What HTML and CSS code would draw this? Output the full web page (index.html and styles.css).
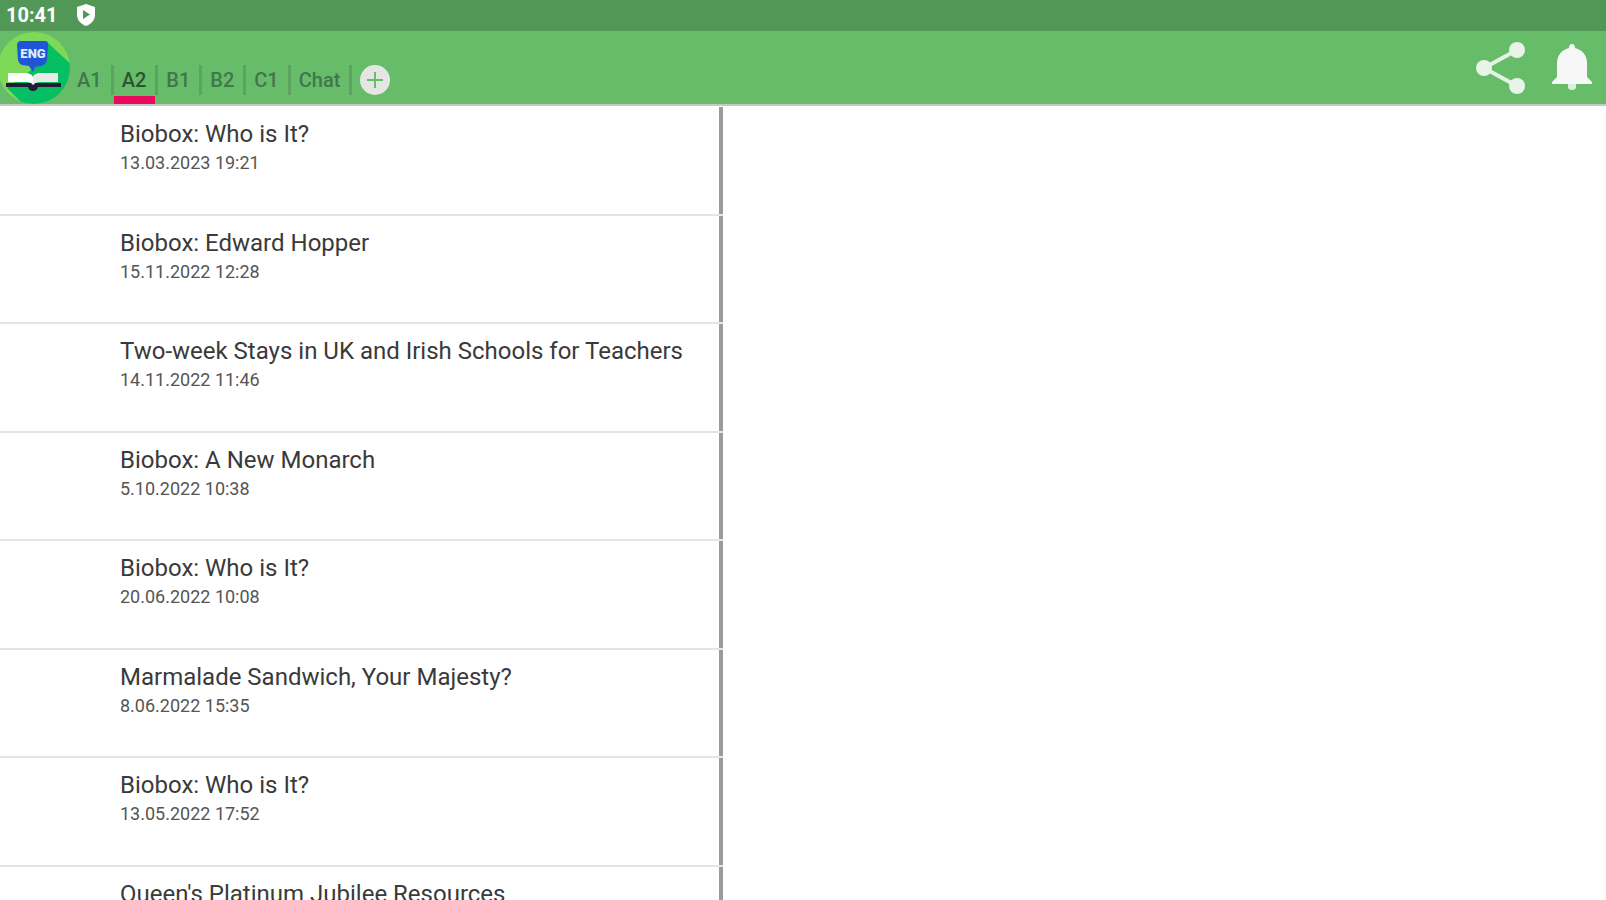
FILE: index.html
```html
<!DOCTYPE html>
<html lang="en">
<head>
  <meta charset="UTF-8">
  <meta name="viewport" content="width=device-width, initial-scale=1.0">
  <title>English Reader</title>
  <link rel="stylesheet" href="styles.css">
</head>
<body>
  <!-- Status bar -->
  <div class="status-bar">
    <span class="clock">10:41</span>
    <svg class="shield" viewBox="0 0 20 22" aria-hidden="true">
      <path d="M10 0 L19 3 V11 C19 16 15 20 10 22 C5 20 1 16 1 11 V3 Z" fill="#fff"/>
      <path d="M7 6 L14 10.5 L7 15 Z" fill="#519755"/>
    </svg>
  </div>

  <!-- Toolbar -->
  <header class="toolbar">
    <svg class="logo" viewBox="0 0 72 74" role="img" aria-label="English Reader">
      <defs>
        <clipPath id="disc"><ellipse cx="34" cy="37" rx="36" ry="36"/></clipPath>
      </defs>
      <g clip-path="url(#disc)">
        <rect x="-2" width="74" height="74" fill="#7dd957"/>
        <path d="M48 12 L72 34 V74 H24 L7 57 L30 40 Z" fill="#06bf63"/>
      </g>
      <path d="M20 10 H46 Q49 11 48 15 L47 29 Q46 34 41 35 L35 36 L33 41 L29 35 L22 34 Q19 33 18 29 L17 14 Q17 11 20 10 Z" fill="#1f56d8"/>
      <text class="logo-text" x="33" y="27" text-anchor="middle">ENG</text>
      <path d="M6 52 H61 V56 H38 Q37 60 33 60 Q29 60 28 56 H6 Z" fill="#241c35"/>
      <path d="M8 42 H27 Q32 43 33 46 Q34 43 39 42 H58 V51 H39 Q35 51 33 54 Q31 51 27 51 H8 Z" fill="#fff"/>
      <path d="M33 46 Q34 43 39 42 H58 V51 H39 Q35 51 33 54 Z" fill="#e9e9ec"/>
    </svg>

    <nav class="tabs">
      <button class="tab">A1</button>
      <button class="tab active">A2</button>
      <button class="tab">B1</button>
      <button class="tab">B2</button>
      <button class="tab">C1</button>
      <button class="tab">Chat</button>
      <button class="add" aria-label="Add tab">
        <svg viewBox="0 0 30 30">
          <circle cx="15" cy="15" r="15" fill="#e3e6e3"/>
          <path d="M15 7 V23 M7 15 H23" stroke="#67bc6a" stroke-width="2"/>
        </svg>
      </button>
    </nav>

    <div class="actions">
      <button class="action" aria-label="Share">
        <svg viewBox="0 0 52 54">
          <path d="M43 9 L10 27 L43 45" fill="none" stroke="#e2f3e3" stroke-width="4"/>
          <circle cx="43" cy="9" r="8" fill="#e6f5e7"/>
          <circle cx="10" cy="27" r="8" fill="#e6f5e7"/>
          <circle cx="43" cy="45" r="8" fill="#e6f5e7"/>
        </svg>
      </button>
      <button class="action" aria-label="Notifications">
        <svg viewBox="0 0 52 54">
          <path d="M22 43 H30 V46 Q30 49 26 49 Q22 49 22 46 Z" fill="#dcf1dd"/>
          <path d="M26 3 Q29 3 29 7 C37 9 41 15 41 22 V36 L46 41 V43 H6 V41 L11 36 V22 C11 15 15 9 23 7 Q23 3 26 3 Z" fill="#f7f7f7"/>
        </svg>
      </button>
    </div>
  </header>

  <main class="content">
    <ul class="articles">
      <li class="article">
        <h2 class="title">Biobox: Who is It?</h2>
        <p class="date">13.03.2023 19:21</p>
      </li>
      <li class="article">
        <h2 class="title">Biobox: Edward Hopper</h2>
        <p class="date">15.11.2022 12:28</p>
      </li>
      <li class="article">
        <h2 class="title">Two-week Stays in UK and Irish Schools for Teachers</h2>
        <p class="date">14.11.2022 11:46</p>
      </li>
      <li class="article">
        <h2 class="title">Biobox: A New Monarch</h2>
        <p class="date">5.10.2022 10:38</p>
      </li>
      <li class="article">
        <h2 class="title">Biobox: Who is It?</h2>
        <p class="date">20.06.2022 10:08</p>
      </li>
      <li class="article">
        <h2 class="title">Marmalade Sandwich, Your Majesty?</h2>
        <p class="date">8.06.2022 15:35</p>
      </li>
      <li class="article">
        <h2 class="title">Biobox: Who is It?</h2>
        <p class="date">13.05.2022 17:52</p>
      </li>
      <li class="article">
        <h2 class="title">Queen's Platinum Jubilee Resources</h2>
      </li>
    </ul>
    <section class="detail"></section>
  </main>
</body>
</html>
```

FILE: styles.css
```css
/* General reset */
* {
  margin: 0;
  padding: 0;
  box-sizing: border-box;
}

body {
  font-family: Roboto, "Liberation Sans", sans-serif;
  background: #fff;
  color: #3a3a3a;
  height: 100vh;
  display: flex;
  flex-direction: column;
  overflow: hidden;
}

button {
  font: inherit;
  color: inherit;
  background: none;
  border: none;
  cursor: pointer;
}

svg {
  display: block;
}

/* Status bar */
.status-bar {
  display: flex;
  align-items: center;
  gap: 18px;
  height: 31px;
  padding: 0 6px 2px;
  background: #519755;
  color: #fff;
  flex-shrink: 0;
}

.clock {
  font-size: 20px;
  font-weight: 700;
}

.shield {
  width: 20px;
  height: 22px;
}

/* Toolbar */
.toolbar {
  display: flex;
  height: 75px;
  background: #67bc6a;
  border-bottom: 2px solid #c3cbbd;
  flex-shrink: 0;
}

.logo {
  width: 72px;
  height: 74px;
}

.logo-text {
  font-size: 13px;
  font-weight: 900;
  fill: #dfe9ff;
}

.tabs {
  display: flex;
  margin-left: -3px;
}

.tab {
  position: relative;
  padding: 25px 12px 0 8px;
  font-size: 20px;
  font-weight: 500;
  color: #41774a;
}

/* separator between tabs */
.tab::after {
  content: "";
  position: absolute;
  right: 0;
  top: 34px;
  width: 3px;
  height: 30px;
  background: #5ca361;
}

.tab.active {
  color: #2c5432;
}

.tab.active::before {
  content: "";
  position: absolute;
  left: 0;
  right: 3px;
  bottom: 0;
  height: 8px;
  background: #e9095f;
}

.add {
  padding: 25px 8px 0;
}

.add svg {
  width: 30px;
  height: 30px;
}

.actions {
  display: flex;
  align-items: center;
  gap: 20px;
  margin-left: auto;
  padding-right: 8px;
}

.action svg {
  width: 52px;
  height: 54px;
}

/* Articles */
.content {
  display: flex;
  flex: 1;
  min-height: 0;
}

.articles {
  width: 45%;
  padding-top: 1px;
  list-style: none;
}

.article {
  position: relative;
  height: 109px;
  padding: 12px 16px 0 120px;
  border-right: 4px solid #9b9b9b;
}

.article:nth-child(even) {
  height: 108px;
}

/* row line, runs across the pane border too */
.article::after {
  content: "";
  position: absolute;
  left: 0;
  right: -4px;
  bottom: 0;
  height: 2px;
  background: #e4e4e4;
}

.title {
  font-size: 24px;
  line-height: 30px;
  font-weight: 400;
  white-space: nowrap;
}

.date {
  font-size: 18px;
  line-height: 28px;
  color: #555;
}

.detail {
  flex: 1;
}
```
